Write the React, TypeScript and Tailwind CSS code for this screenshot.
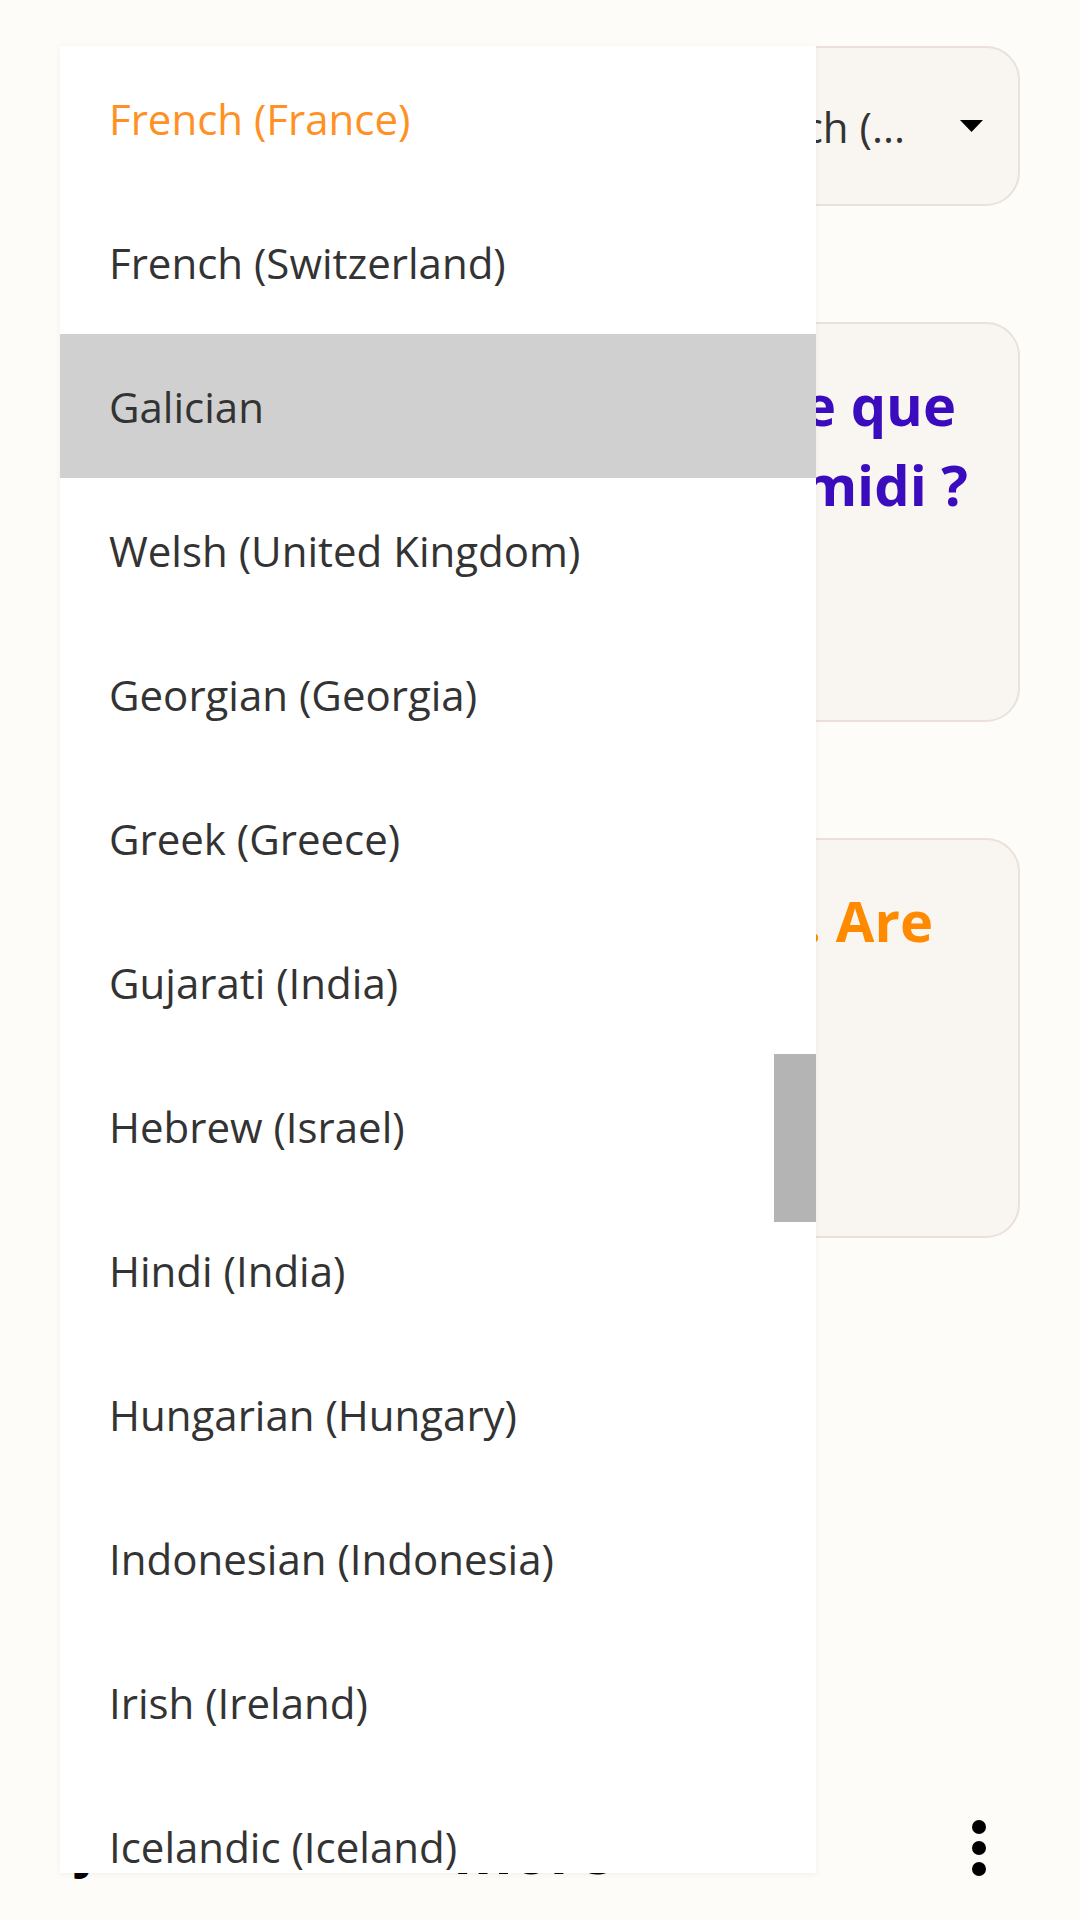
const languages = [
  'French (France)',
  'French (Switzerland)',
  'Galician',
  'Welsh (United Kingdom)',
  'Georgian (Georgia)',
  'Greek (Greece)',
  'Gujarati (India)',
  'Hebrew (Israel)',
  'Hindi (India)',
  'Hungarian (Hungary)',
  'Indonesian (Indonesia)',
  'Irish (Ireland)',
  'Icelandic (Iceland)',
]

export default function App() {
  const selected = 'French (France)'
  const highlighted = 'Galician'

  return (
    <div
      className="relative w-[1080px] h-[1920px] overflow-hidden bg-[#fdfcf8] flex flex-col"
      style={{ fontFamily: '"Open Sans", "Noto Sans", sans-serif' }}
    >
      {/* page content behind the dropdown */}
      <div className="px-[60px] pt-[46px] flex flex-col gap-[116px]">
        <div className="h-[160px] rounded-[34px] border-2 border-[#ebe1da] bg-[#f9f6f1] flex items-center pr-[35px]">
          <span className="ml-auto text-[42px] text-[#333333]">French (...</span>
          <svg className="ml-[55px]" width="23" height="12" viewBox="0 0 23 12">
            <path d="M0 0 L23 0 L11.5 12 Z" fill="#000" />
          </svg>
        </div>

        <div className="h-[400px] rounded-[34px] border-2 border-[#ebe1da] bg-[#f9f6f1] pt-[40px] text-[56px] leading-[80px] font-bold text-[#3a0cbd] text-right">
          <span className="block pr-[62px]">Qu'est-ce que</span>
          <span className="block pr-[50px]">tu fais cet après-midi ?</span>
        </div>

        <div className="h-[400px] rounded-[34px] border-2 border-[#ebe1da] bg-[#f9f6f1] pt-[40px] text-[56px] leading-[80px] font-bold text-[#ff8a00]">
          <span className="block text-right pr-[85px]">Bonjour les amis. Are</span>
          <span className="block pl-[40px]">you free?</span>
        </div>
      </div>

      {/* bottom bar */}
      <div className="mt-auto mb-[34px] h-[76px] flex items-center px-[60px]">
        <span className="mt-[6px] ml-[18px] text-[48px] leading-none font-bold text-black">Jo</span>
        <span className="mt-[6px] ml-[330px] text-[60px] leading-none font-bold text-black">more</span>
        <svg className="ml-auto mr-[34px]" width="14" height="56" viewBox="0 0 14 56">
          <circle cx="7" cy="7" r="7" fill="#000" />
          <circle cx="7" cy="28" r="7" fill="#000" />
          <circle cx="7" cy="49" r="7" fill="#000" />
        </svg>
      </div>

      {/* open dropdown list */}
      <div className="absolute left-[60px] top-[46px] w-[756px] h-[1827px] bg-white overflow-hidden shadow-[0_1px_6px_rgba(0,0,0,0.06)]">
        {languages.map(lang => (
          <div
            key={lang}
            className={
              'h-[144px] flex items-center pl-[49px] text-[42px] ' +
              (lang === highlighted ? 'bg-[#d0d0d0] ' : '') +
              (lang === selected ? 'text-[#ff9124]' : 'text-[#333333]')
            }
          >
            {lang}
          </div>
        ))}
        <div className="absolute right-0 top-[1008px] w-[42px] h-[168px] bg-[#b4b4b4]" />
      </div>
    </div>
  )
}
